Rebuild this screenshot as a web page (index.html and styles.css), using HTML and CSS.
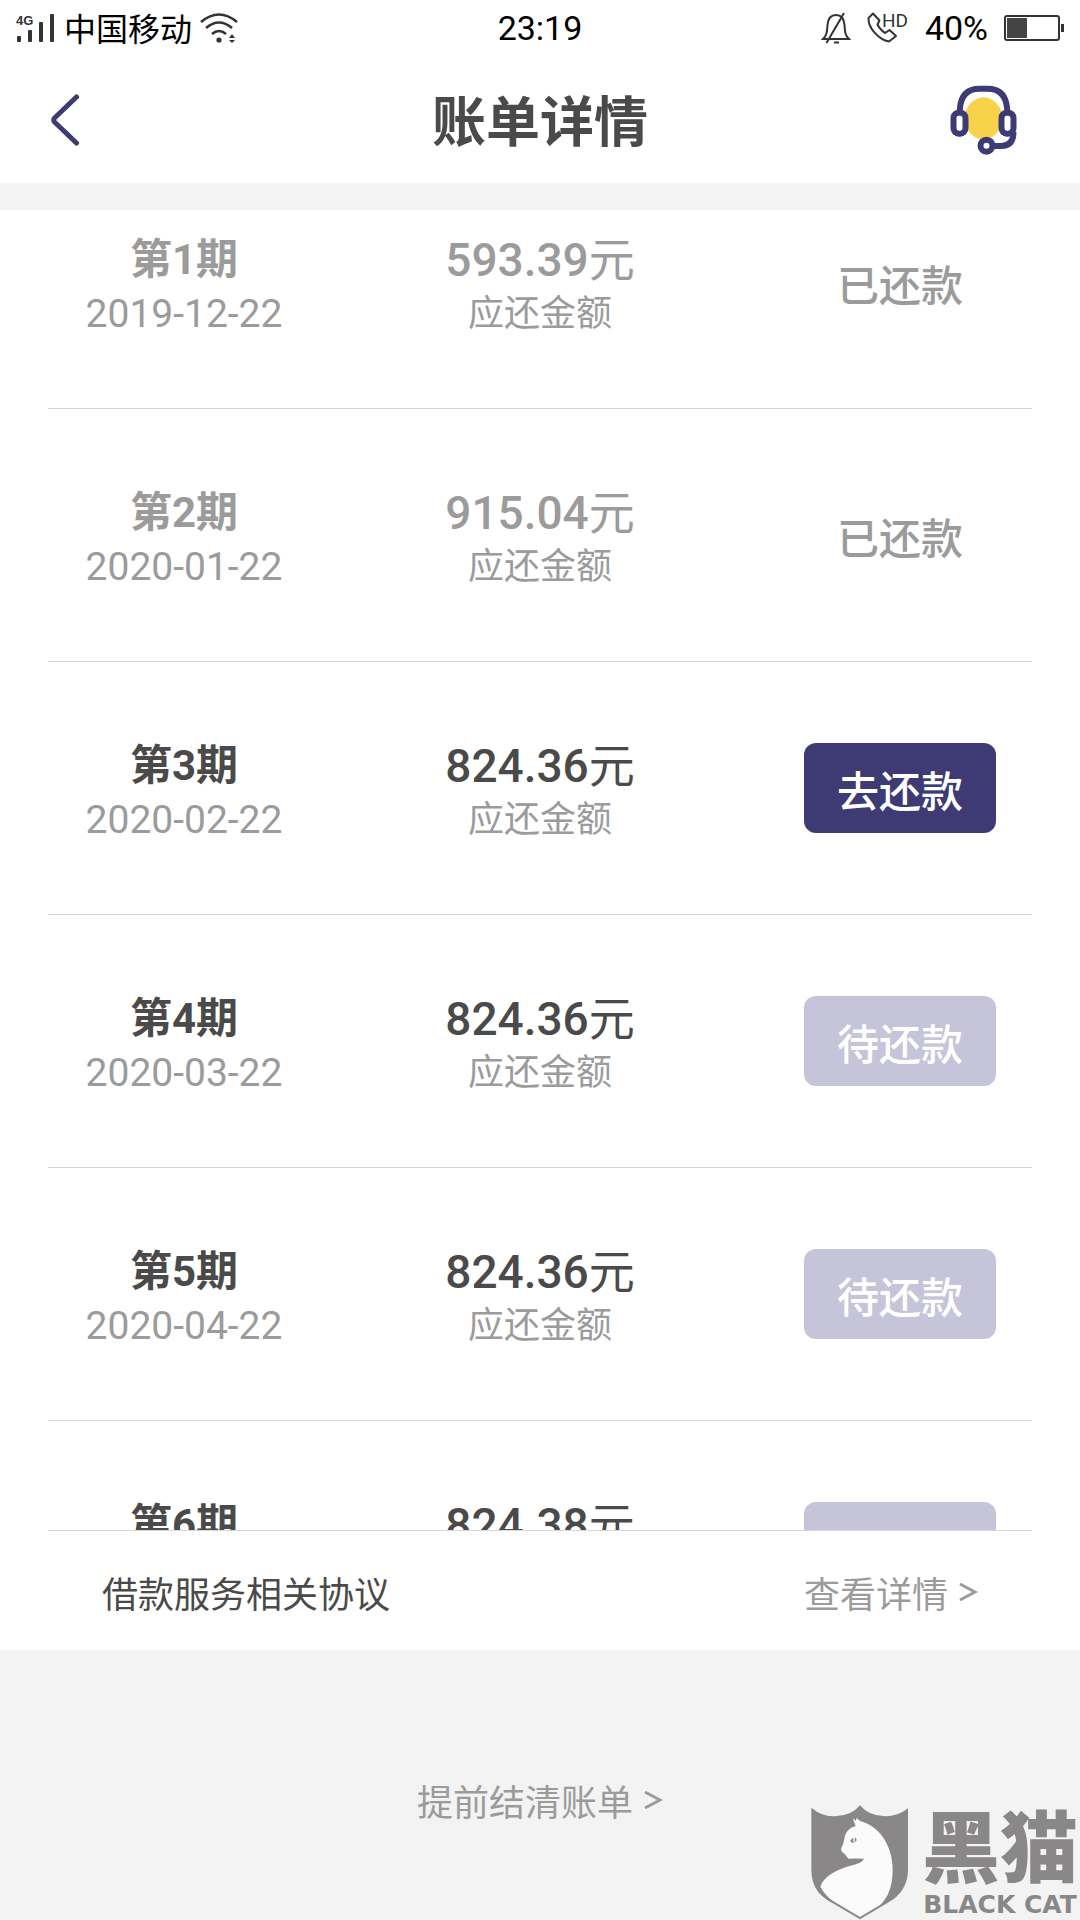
FILE: index.html
```
<!DOCTYPE html>
<html lang="zh-CN">
<head>
<meta charset="utf-8">
<meta name="viewport" content="width=device-width, initial-scale=1">
<title>账单详情</title>
<link rel="stylesheet" href="styles.css">
</head>
<body>
<div class="status">
  <div class="status-left">
    <svg class="signal" width="40" height="30" viewBox="0 0 40 30" aria-hidden="true">
      <g fill="#333"><rect x="1" y="23" width="4" height="6" rx="1"/><rect x="12" y="17" width="4" height="12" rx="1"/><rect x="23" y="9" width="4" height="20" rx="1"/><rect x="34" y="1" width="4" height="28" rx="1"/></g>
      <text x="0" y="12" class="net">4G</text>
    </svg>
    <span class="carrier">中国移动</span>
    <svg width="38" height="30" viewBox="0 0 38 30" fill="none" stroke="#333" stroke-width="2.6" aria-hidden="true">
      <path d="M1 9Q19-6 37 9M6 15Q19 4 32 15M12 21Q19 15 26 21"/>
      <circle cx="19" cy="27" r="2.6" fill="#333" stroke="none"/>
      <path d="M29 25l3-4 3 4zM29 27l3 3 3-3z" fill="#333" stroke="none"/>
    </svg>
  </div>
  <time class="clock">23:19</time>
  <div class="status-right">
    <svg width="30" height="32" viewBox="0 0 30 32" fill="none" stroke="#333" stroke-width="2" aria-hidden="true">
      <path d="M2 27H28C24 23 24 20 23.500 13C23 7 20 3 15 3S7 7 6.500 13C6 20 6 23 2 27zM13 30.500h5M5.500 31L23 1"/>
    </svg>
    <svg class="call" width="42" height="32" viewBox="0 0 42 32" fill="none" stroke="#333" stroke-width="2" aria-hidden="true">
      <path d="M6 1.500L1.500 6C1 16 12 28 22 29.500L29 24L22.500 18L18 21C14 18 12 16 10.500 12.500L12.500 8.500z" stroke-linejoin="round"/>
      <text x="15" y="15" class="hd">HD</text>
    </svg>
    <span class="percent">40%</span>
    <svg width="60" height="26" viewBox="0 0 60 26" aria-hidden="true">
      <rect x="1" y="1" width="54" height="24" rx="2" fill="none" stroke="#333" stroke-width="2"/>
      <rect x="3" y="3" width="20" height="20" fill="#444"/><rect x="57" y="9" width="3" height="8" fill="#333"/>
    </svg>
  </div>
</div>
<header class="header">
  <button class="icon-button" type="button" aria-label="返回">
    <svg width="30" height="52" viewBox="0 0 30 52" fill="none" stroke="#3d3a74" stroke-width="5" stroke-linecap="round" stroke-linejoin="round"><path d="M26.500 3L4.500 24Q3 26 4.500 28L26.500 49"/></svg>
  </button>
  <h1 class="title">账单详情</h1>
  <button class="icon-button help" type="button" aria-label="客服">
    <svg width="67" height="70" viewBox="92 49 200 210" fill="none" stroke="#3d3a74" stroke-width="18">
      <ellipse cx="192" cy="149" rx="56" ry="63" fill="#f9d24b" stroke="none"/>
      <path d="M121 126V122Q125 60 180 60H204Q259 60 263 122V126M282 190Q282 232 245 232H224"/>
      <rect x="102" y="132" width="36" height="63" rx="16" fill="#fff"/>
      <rect x="246" y="132" width="36" height="63" rx="16" fill="#fff"/>
      <circle cx="201" cy="231" r="18" fill="#fff"/>
    </svg>
  </button>
</header>
<main class="bill">
  <ul class="list">
    <li class="row paid">
      <div class="cell"><h2 class="term">第1期</h2><time class="date">2019-12-22</time></div>
      <div class="cell"><p class="amount">593.39<span class="unit">元</span></p><p class="label">应还金额</p></div>
      <div class="action"><span class="state">已还款</span></div>
    </li>
    <li class="row paid">
      <div class="cell"><h2 class="term">第2期</h2><time class="date">2020-01-22</time></div>
      <div class="cell"><p class="amount">915.04<span class="unit">元</span></p><p class="label">应还金额</p></div>
      <div class="action"><span class="state">已还款</span></div>
    </li>
    <li class="row">
      <div class="cell"><h2 class="term">第3期</h2><time class="date">2020-02-22</time></div>
      <div class="cell"><p class="amount">824.36<span class="unit">元</span></p><p class="label">应还金额</p></div>
      <div class="action"><button class="state pay" type="button">去还款</button></div>
    </li>
    <li class="row">
      <div class="cell"><h2 class="term">第4期</h2><time class="date">2020-03-22</time></div>
      <div class="cell"><p class="amount">824.36<span class="unit">元</span></p><p class="label">应还金额</p></div>
      <div class="action"><button class="state pay" type="button" disabled>待还款</button></div>
    </li>
    <li class="row">
      <div class="cell"><h2 class="term">第5期</h2><time class="date">2020-04-22</time></div>
      <div class="cell"><p class="amount">824.36<span class="unit">元</span></p><p class="label">应还金额</p></div>
      <div class="action"><button class="state pay" type="button" disabled>待还款</button></div>
    </li>
    <li class="row">
      <div class="cell"><h2 class="term">第6期</h2></div>
      <div class="cell"><p class="amount">824.38<span class="unit">元</span></p></div>
      <div class="action"><button class="state pay" type="button" aria-label="待还款" disabled></button></div>
    </li>
  </ul>
  <div class="agreement">
    <span>借款服务相关协议</span>
    <a class="link" href="#agreement">查看详情 <svg class="chevron" width="20" height="20" viewBox="0 0 20 20"><path d="M2 2L17 10L2 18"/></svg></a>
  </div>
</main>
<footer class="footer">
  <a class="link" href="#settle">提前结清账单 <svg class="chevron" width="20" height="20" viewBox="0 0 20 20"><path d="M2 2L17 10L2 18"/></svg></a>
</footer>
<div class="watermark">
  <svg width="98" height="115" viewBox="63 44 294 345" aria-hidden="true">
    <path fill="#8a8788" d="M64 52Q94 78 135 78Q184 77 210 45Q236 77 285 78Q324 78 354 54V236C354 290 326 320 292 338L210 387L126 337C90 318 64 290 64 236z"/>
    <path fill="#fbfbfb" d="M188 84L197 91L200 83L210 92C262 104 308 160 308 238C308 290 292 325 270 344L210 380L128 331Q105 315 91 289C104 255 139 240 176 228C200 221 215 218 222 205Q196 204 176 205C169 198 166 191 156 184Q150 178 158 164C165 151 160 133 176 118Q186 109 197 108z"/>
    <path fill="#8a8788" d="M181 150L190 142V158Q182 158 181 150zM193 141Q203 146 198 153L192 157L195 149z"/>
  </svg>
  <div class="brand"><span class="brand-cn">黑猫</span><span class="brand-en">BLACK CAT</span></div>
</div>
</body>
</html>
```
FILE: styles.css
```
* { box-sizing: border-box; }
body {
  margin: 0;
  height: 100vh;
  display: flex;
  flex-direction: column;
  position: relative;
  overflow: hidden;
  background: #f3f3f3;
  color: #4a4a4a;
  font-family: Roboto, "Noto Sans CJK SC", sans-serif;
  font-size: 36px;
}
h1, h2, p, ul { margin: 0; padding: 0; }
button { border: 0; padding: 0; background: none; font: inherit; }
svg { display: block; flex: none; }

.status {
  display: grid;
  grid-template-columns: 1fr auto 1fr;
  align-items: center;
  height: 56px;
  padding: 0 16px;
  background: #fff;
  color: #000;
  font-size: 34px;
}
.status-left, .status-right { display: flex; align-items: center; gap: 8px; }
.status-right { justify-content: flex-end; gap: 16px; }
.signal, .call { overflow: visible; }
.carrier { padding-top: 3px; font-size: 32px; line-height: 40px; }
.net { font: bold 13px "Liberation Sans", sans-serif; fill: #333; }
.hd { font: 19px Roboto, sans-serif; fill: #333; stroke: none; }

.header {
  display: grid;
  grid-template-columns: 1fr auto 1fr;
  align-items: center;
  height: 127px;
  padding: 0 50px;
  background: #fff;
}
.icon-button { width: 80px; }
.help { justify-self: end; }
.title { padding-top: 8px; font-size: 54px; font-weight: 700; line-height: 72px; }

.bill {
  flex: 1;
  min-height: 0;
  display: flex;
  flex-direction: column;
  margin-top: 27px;
  padding: 0 48px;
  background: #fff;
}
.list { flex: 1; min-height: 0; overflow: hidden; list-style: none; }
.row {
  display: grid;
  grid-template-columns: 272px 1fr 272px;
  align-items: center;
  padding: 81px 0;
  border-bottom: 1px solid #d8d8d8;
}
.row:first-child { padding-top: 27px; }
.cell {
  display: flex;
  flex-direction: column;
  align-items: center;
  height: 98px;
  margin: -4px 0;
}
.term { font-size: 42px; font-weight: 700; line-height: 54px; }
.amount { font-size: 46px; font-weight: 500; line-height: 54px; }
.unit { font-weight: 400; }
.date { font-size: 39px; line-height: 54px; color: #9b9b9b; }
.label { font-size: 36px; line-height: 54px; color: #9b9b9b; }
.action { display: flex; justify-content: flex-end; padding-right: 36px; }
.state {
  width: 192px;
  height: 90px;
  padding-top: 10px;
  line-height: 80px;
  text-align: center;
  font-size: 42px;
  font-weight: 500;
}
.pay { border-radius: 12px; background: #3d3a74; color: #fff; }
.pay:disabled { background: #c6c4d8; }
.paid { color: #9b9b9b; }

.agreement {
  display: flex;
  align-items: center;
  justify-content: space-between;
  height: 120px;
  padding: 2px 54px 0;
  border-top: 1px solid #d8d8d8;
}
.link {
  display: flex;
  align-items: center;
  gap: 10px;
  color: #9b9b9b;
  text-decoration: none;
}
.chevron { fill: none; stroke: #9b9b9b; stroke-width: 3; }
.footer {
  display: flex;
  align-items: center;
  justify-content: center;
  height: 270px;
  padding-top: 30px;
}

.watermark {
  position: absolute;
  right: 2px;
  bottom: 0;
  display: flex;
  align-items: flex-end;
  gap: 13px;
  color: #8a8788;
}
.brand { display: flex; flex-direction: column; align-items: center; }
.brand-cn { font-size: 78px; font-weight: 900; line-height: 78px; }
.brand-en { font: bold 25px/30px "DejaVu Sans", sans-serif; }
```
